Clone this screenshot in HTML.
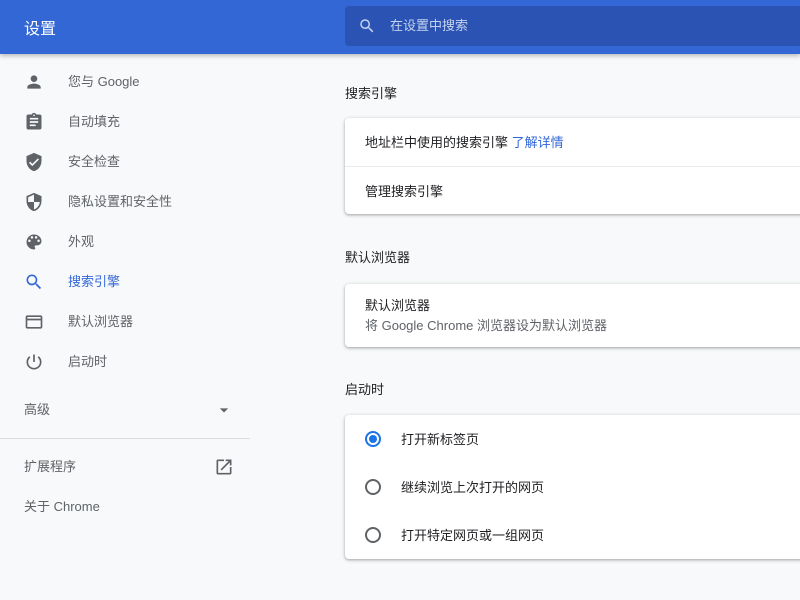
<!DOCTYPE html>
<html><head><meta charset="utf-8"><style>
*{margin:0;padding:0;box-sizing:border-box}
body{width:800px;height:600px;overflow:hidden;background:#f8f9fa;font-family:"Liberation Sans","Noto Sans CJK SC",sans-serif;font-size:13px;color:#202124;position:relative}
.hdr{position:absolute;left:0;top:0;width:800px;height:54px;background:#3367d6;box-shadow:0 2px 4px rgba(0,0,0,.25)}
.hdr .t{position:absolute;left:24px;top:15px;color:#fff;font-size:16px}
.sb{position:absolute;left:345px;top:6px;width:455px;height:40px;background:#2a53b3;border-radius:4px 0 0 4px}
.sb span{position:absolute;left:45px;top:9px;color:#c6d3f0;font-size:13px}
.nav{position:absolute;left:0;top:62px;width:250px}
.it{height:40px;position:relative;color:#5f6368}
.it svg{position:absolute;left:24px;top:10px}
.it span{position:absolute;left:68px;top:9px}
.it.a{color:#3367d6}
.div{position:absolute;left:0;top:438px;width:250px;border-top:1px solid #dadce0}
h2{position:absolute;left:345px;font-size:13px;font-weight:normal;color:#202124}
.card{position:absolute;left:345px;width:460px;background:#fff;border-radius:4px;box-shadow:0 1px 2px rgba(60,64,67,.3),0 1px 3px 1px rgba(60,64,67,.15)}
.row{height:48px;position:relative;border-top:1px solid #e8eaed}
.row:first-child{border-top:none}
.row span{position:absolute;left:20px;top:14px}
.rad{position:absolute;left:20px;top:16px;width:16px;height:16px;border:2px solid #5f6368;border-radius:50%}
.rad.on{border-color:#1a73e8}
.rad.on:after{content:"";position:absolute;left:2px;top:2px;width:8px;height:8px;border-radius:50%;background:#1a73e8}
.row .l{left:56px}
</style></head><body>
<div class="hdr"><div class="t">设置</div>
<div class="sb"><svg style="position:absolute;left:13px;top:11px" width="18" height="18" viewBox="0 0 24 24"><path fill="#c6d3f0" d="M15.5 14h-.79l-.28-.27A6.47 6.47 0 0016 9.5 6.5 6.5 0 109.5 16c1.61 0 3.09-.59 4.230-1.57l.27.28v.79l5 4.99L20.49 19l-4.99-5zm-6 0C7.01 14 5 11.99 5 9.5S7.01 5 9.5 5 14 7.01 14 9.5 11.99 14 9.5 14z"/></svg><span>在设置中搜索</span></div></div>
<div class="nav">
<div class="it"><svg width="20" height="20" viewBox="0 0 24 24"><path fill="#5f6368" d="M12 12c2.2 0 4-1.8 4-4s-1.8-4-4-4-4 1.8-4 4 1.8 4 4 4zm0 2c-2.7 0-8 1.3-8 4v2h16v-2c0-2.7-5.3-4-8-4z"/></svg><span>您与 Google</span></div>
<div class="it"><svg width="20" height="20" viewBox="0 0 24 24"><path fill="#5f6368" d="M19 3h-4.2C14.4 1.8 13.3 1 12 1s-2.4.8-2.8 2H5c-1.1 0-2 .9-2 2v14c0 1.1.9 2 2 2h14c1.1 0 2-.9 2-2V5c0-1.1-.9-2-2-2zm-7 0c.6 0 1 .4 1 1s-.4 1-1 1-1-.4-1-1 .4-1 1-1zm2 14H7v-2h7v2zm3-4H7v-2h10v2zm0-4H7V7h10v2z"/></svg><span>自动填充</span></div>
<div class="it"><svg width="20" height="20" viewBox="0 0 24 24"><path fill="#5f6368" d="M12 1L3 5v6c0 5.5 3.8 10.7 9 12 5.2-1.3 9-6.5 9-12V5l-9-4zm-2 16l-4-4 1.4-1.4 2.6 2.6 6.6-6.6L18 9l-8 8z"/></svg><span>安全检查</span></div>
<div class="it"><svg width="20" height="20" viewBox="0 0 24 24"><path fill="#5f6368" d="M12 1L3 5v6c0 5.5 3.8 10.7 9 12 5.2-1.3 9-6.5 9-12V5l-9-4zm0 11h7c-.5 4.1-3.3 7.8-7 8.9V12H5V6.3l7-3.1V12z"/></svg><span>隐私设置和安全性</span></div>
<div class="it"><svg width="20" height="20" viewBox="0 0 24 24"><path fill="#5f6368" d="M12 3a9 9 0 000 18c.8 0 1.5-.7 1.5-1.5 0-.4-.1-.7-.4-1-.2-.3-.4-.6-.4-1 0-.8.7-1.5 1.5-1.5H16c2.8 0 5-2.2 5-5 0-4.4-4-8-9-8zm-5.5 9a1.5 1.5 0 110-3 1.5 1.5 0 010 3zm3-4a1.5 1.5 0 110-3 1.5 1.5 0 010 3zm5 0a1.5 1.5 0 110-3 1.5 1.5 0 010 3zm3 4a1.5 1.5 0 110-3 1.5 1.5 0 010 3z"/></svg><span>外观</span></div>
<div class="it a"><svg width="20" height="20" viewBox="0 0 24 24"><path fill="#3367d6" d="M15.5 14h-.79l-.28-.27A6.470 6.47 0 0016 9.5 6.5 6.5 0 109.5 16c1.61 0 3.09-.59 4.23-1.57l.27.28v.79l5 4.99L20.49 19l-4.99-5zm-6 0C7.01 14 5 11.99 5 9.5S7.01 5 9.5 5 14 7.01 14 9.5 11.99 14 9.5 14z"/></svg><span>搜索引擎</span></div>
<div class="it"><svg width="20" height="20" viewBox="0 0 24 24"><path fill="#5f6368" d="M20 4H4c-1.1 0-2 .9-2 2v12c0 1.1.9 2 2 2h16c1.1 0 2-.9 2-2V6c0-1.1-.9-2-2-2zm0 14H4v-8h16v8zm0-10H4V6h16v2z"/></svg><span>默认浏览器</span></div>
<div class="it"><svg width="20" height="20" viewBox="0 0 24 24"><path fill="none" stroke="#5f6368" stroke-width="2" d="M12 3v9M7 5.8A8 8 0 1017 5.8"/></svg><span>启动时</span></div>
<div class="it" style="margin-top:8px"><span style="left:24px">高级</span><svg style="left:214px;top:10px" width="20" height="20" viewBox="0 0 24 24"><path fill="#5f6368" d="M7 10l5 5 5-5z"/></svg></div>
</div>
<div class="div"></div>
<div class="it" style="position:absolute;top:447px;width:250px"><span style="left:24px">扩展程序</span><svg style="left:214px;top:10px" width="20" height="20" viewBox="0 0 24 24"><path fill="#5f6368" d="M19 19H5V5h7V3H5a2 2 0 00-2 2v14a2 2 0 002 2h14c1.1 0 2-.9 2-2v-7h-2v7zM14 3v2h3.6l-9.8 9.8 1.4 1.4L19 6.4V10h2V3h-7z"/></svg></div>
<div class="it" style="position:absolute;top:487px;width:250px"><span style="left:24px">关于 Chrome</span></div>

<h2 style="top:83px">搜索引擎</h2>
<div class="card" style="top:118px">
<div class="row"><span>地址栏中使用的搜索引擎 <a style="color:#3367d6">了解详情</a></span></div>
<div class="row"><span>管理搜索引擎</span></div>
</div>
<h2 style="top:247px">默认浏览器</h2>
<div class="card" style="top:284px;height:63px"><span style="position:absolute;left:20px;top:11px">默认浏览器</span><span style="position:absolute;left:20px;top:31px;color:#5f6368">将 Google Chrome 浏览器设为默认浏览器</span></div>
<h2 style="top:379px">启动时</h2>
<div class="card" style="top:415px">
<div class="row"><div class="rad on"></div><span class="l">打开新标签页</span></div>
<div class="row" style="border:none"><div class="rad"></div><span class="l">继续浏览上次打开的网页</span></div>
<div class="row" style="border:none"><div class="rad"></div><span class="l">打开特定网页或一组网页</span></div>
</div>
</body></html>
